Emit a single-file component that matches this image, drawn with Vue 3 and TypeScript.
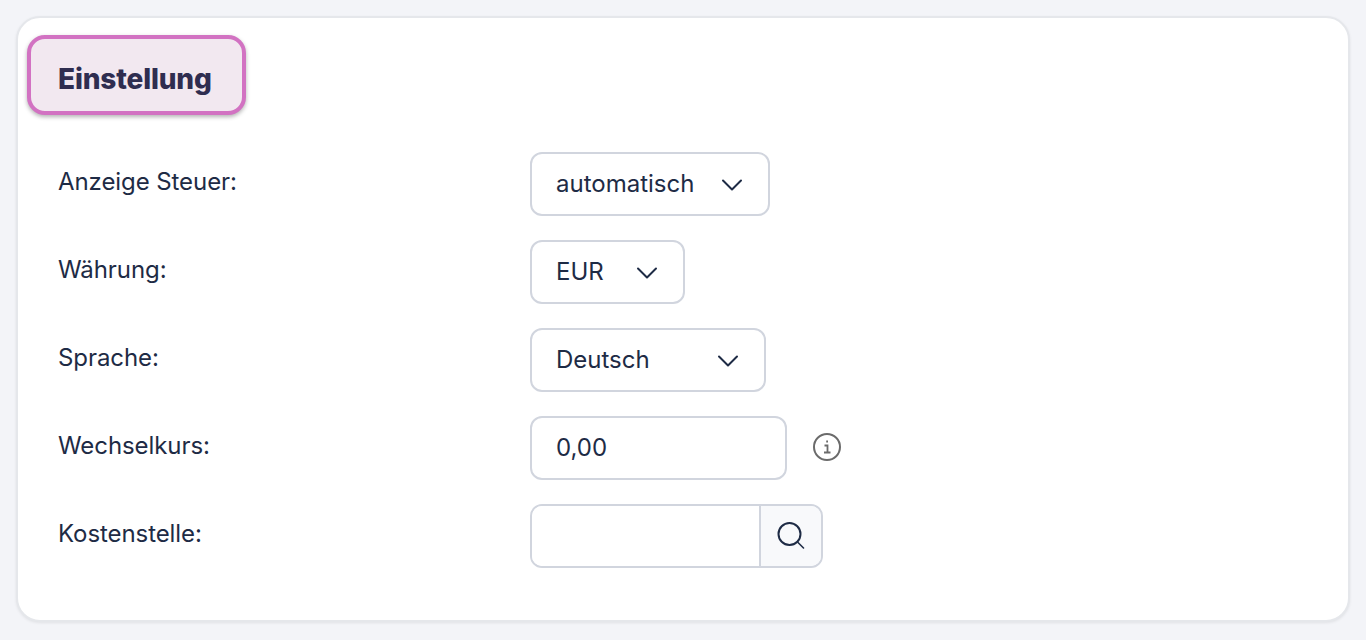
<script setup lang="ts">
const selects = [
  { label: 'Anzeige Steuer:', value: 'automatisch', width: 240 },
  { label: 'Währung:', value: 'EUR', width: 155 },
  { label: 'Sprache:', value: 'Deutsch', width: 236 },
]
</script>

<template>
  <div class="page">
    <section class="card">
      <h2 class="title">Einstellung</h2>
      <div class="form">
        <div v-for="s in selects" :key="s.label" class="row">
          <label class="label">{{ s.label }}</label>
          <button type="button" class="field select" :style="{ width: s.width + 'px' }">
            <span>{{ s.value }}</span>
            <svg class="chevron" width="24" height="24" viewBox="0 0 24 24" fill="none" stroke="currentColor" stroke-width="2" stroke-linecap="round" stroke-linejoin="round"><path d="M3 8.5l9 9 9-9"/></svg>
          </button>
        </div>
        <div class="row">
          <label class="label">Wechselkurs:</label>
          <input class="field rate" type="text" value="0,00" />
          <svg class="info" width="30" height="30" viewBox="0 0 30 30" fill="none" stroke="#6b6b6b">
            <circle cx="15" cy="15" r="13" stroke-width="2"/>
            <path d="M12.5 13.5H15.5V20M12 20.5H18.5" stroke-width="1.8"/>
            <path d="M14.2 9.5h1.8" stroke-width="2.2"/>
          </svg>
        </div>
        <div class="row">
          <label class="label">Kostenstelle:</label>
          <div class="search">
            <input class="search-input" type="text" />
            <button type="button" class="search-btn">
              <svg width="30" height="30" viewBox="0 0 30 30" fill="none" stroke="currentColor" stroke-linecap="round"><circle cx="13.5" cy="13" r="11" stroke-width="2"/><path d="M22 21.5l5.5 5.5" stroke-width="1.6"/></svg>
            </button>
          </div>
        </div>
      </div>
    </section>
  </div>
</template>

<style scoped>
.page { box-sizing: border-box; width: 1366px; height: 640px; padding: 16px; background: #f3f4f8; font-family: Inter, "Liberation Sans", sans-serif; color: #1e2b45; }
.card { box-sizing: border-box; height: 606px; padding: 17px 9px 0; background: #fff; border: 2px solid #e5e7eb; border-radius: 24px; box-shadow: 0 1px 3px rgba(0, 0, 0, 0.08); }
.title { box-sizing: border-box; width: 219px; height: 80px; margin: 0; padding: 8px 27px 0; display: flex; align-items: center; background: #f2e8f0; border: 4px solid #d272c2; border-radius: 18px; box-shadow: 0 2px 4px rgba(0, 0, 0, 0.3); color: #2f2d50; font-size: 28px; font-weight: 800; letter-spacing: -0.15px; }
.form { display: flex; flex-direction: column; gap: 24px; margin-top: 37px; padding-left: 31px; }
.row { display: flex; align-items: flex-start; height: 64px; }
.label { width: 472px; flex: none; padding-top: 14px; font-size: 24px; line-height: 32px; letter-spacing: -0.08px; }
.field { box-sizing: border-box; height: 64px; background: #fff; border: 2px solid #d1d5de; border-radius: 12px; font: inherit; font-size: 24px; color: inherit; }
.select { display: flex; align-items: center; justify-content: space-between; padding: 0 24px 2px; }
.chevron { flex: none; margin-top: 2px; }
.rate { width: 257px; padding: 0 24px 1px; outline: none; }
.info { margin: 16px 0 0 25px; }
.search { box-sizing: border-box; display: flex; width: 293px; height: 64px; border: 2px solid #d1d5de; border-radius: 12px; overflow: hidden; }
.search-input { flex: 1; min-width: 0; border: none; outline: none; }
.search-btn { width: 62px; flex: none; display: flex; align-items: center; justify-content: center; padding: 0; background: #f8f9fb; border: none; border-left: 2px solid #d1d5de; color: inherit; }
</style>
